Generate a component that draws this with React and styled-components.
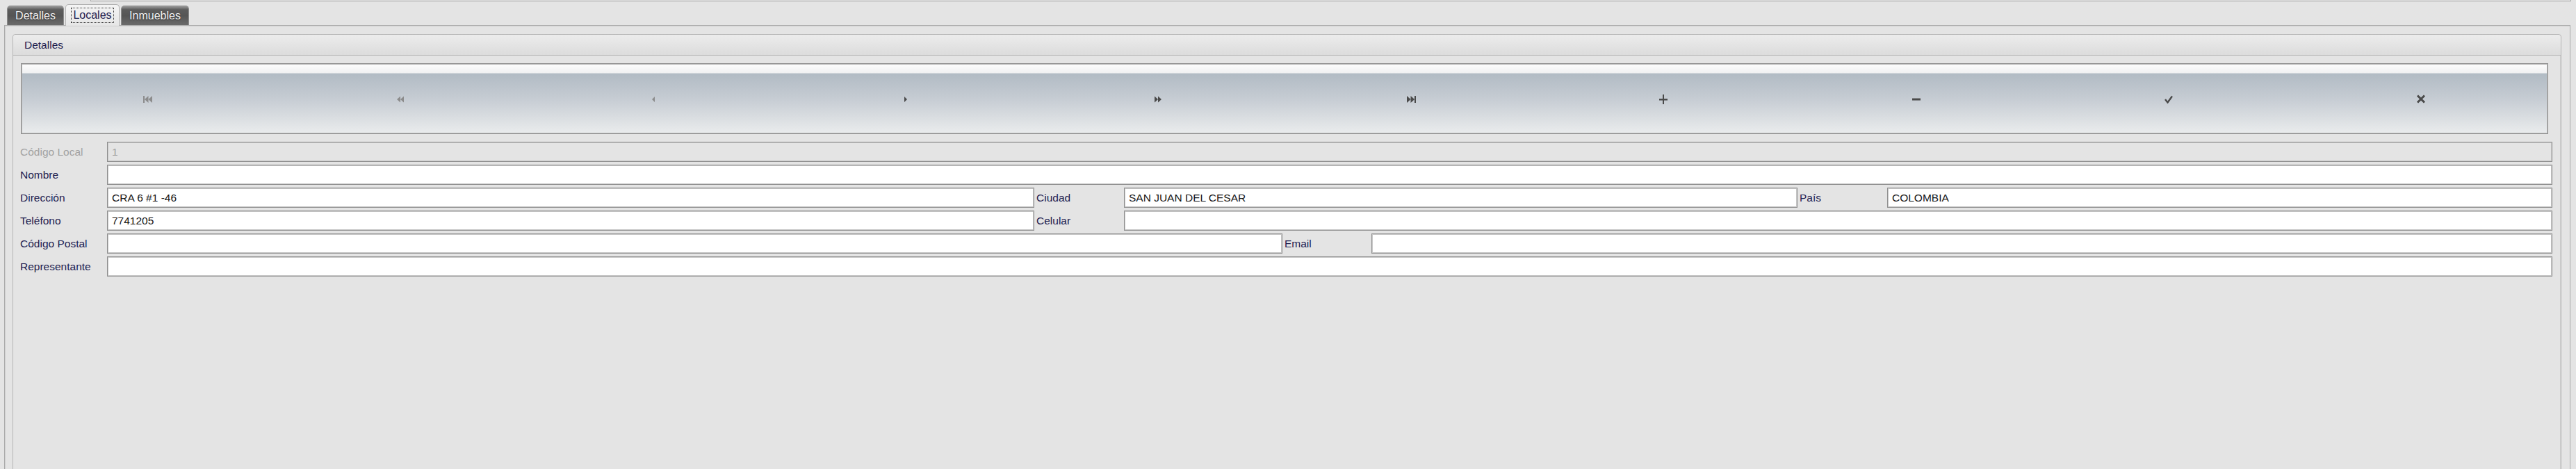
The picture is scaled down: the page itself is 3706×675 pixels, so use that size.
import React from "react";
import styled, { createGlobalStyle } from "styled-components";

const GlobalStyle = createGlobalStyle`
  html, body {
    margin: 0;
    padding: 0;
    background: #e4e4e4;
    font-family: "Liberation Sans", Arial, sans-serif;
  }
`;

const Page = styled.div`
  width: 3706px;
  height: 675px;
  overflow: hidden;
  background: #e4e4e4;
`;

const TopStrip = styled.div`
  margin-left: 130px;
  width: 3567px;
  height: 1px;
  border: 1px solid #a6a6a6;
  border-top: none;
`;

const TabBar = styled.div`
  display: flex;
  align-items: flex-end;
  gap: 2px;
  height: 34px;
  padding-left: 10px;
`;

const Tab = styled.div`
  box-sizing: border-box;
  width: ${(p) => p.$w}px;
  height: ${(p) => (p.$active ? 31 : 28)}px;
  display: flex;
  align-items: center;
  justify-content: center;
  border-radius: 5px 5px 0 0;
  font-size: 16px;
  margin-bottom: ${(p) => (p.$active ? -1 : 0)}px;
  position: relative;
  z-index: ${(p) => (p.$active ? 2 : 0)};
  ${(p) =>
    p.$active
      ? `
    background: linear-gradient(#f4f4f4, #e6e6e6);
    border: 1px solid #b2b2b2;
    border-bottom: none;
    color: #1d2050;
  `
      : `
    background: linear-gradient(#9a9a9a 0%, #5c5c5c 18%, #555 50%, #6a6a6a 100%);
    border: 1px solid #8e8e8e;
    border-bottom: none;
    color: #f4f4f4;
    text-shadow: 0 1px 1px #222;
  `}
`;

const FocusText = styled.span`
  outline: 1px dotted #333;
  outline-offset: 1px;
  padding: 0 1px;
`;

const TabPanel = styled.div`
  box-sizing: border-box;
  margin-left: 6px;
  width: 3692px;
  height: 700px;
  border: 1px solid #a9a9a9;
  box-shadow: inset 1px 1px 0 #cfcfcf;
  padding: 12px 12px 0 11px;
  position: relative;
  z-index: 1;
`;

const Section = styled.div`
  box-sizing: border-box;
  height: 700px;
  border: 1px solid #b4b4b4;
  border-radius: 4px 4px 0 0;
  box-shadow: inset -1px 0 0 #d0d0d0;
`;

const SectionHeader = styled.div`
  height: 29px;
  display: flex;
  align-items: center;
  padding-left: 16px;
  font-size: 15.5px;
  color: #1d2050;
  background: linear-gradient(#ececec, #dcdcdc);
  border-bottom: 1px solid #b6b6b6;
  border-radius: 4px 4px 0 0;
`;

const SectionBody = styled.div`
  padding: 11px 12px 0 11px;
`;

const Toolbar = styled.div`
  box-sizing: border-box;
  height: 102px;
  margin-right: 6px;
  display: flex;
  border: 1px solid #8e8e8e;
  box-shadow: inset 0 0 0 1px #b8b8b8;
  background: linear-gradient(
    #fdfdfd 0px,
    #f0f1f2 13px,
    #b1bbc4 14px,
    #c6ccd3 50px,
    #eaeced 100%
  );
`;

const ToolButton = styled.div`
  flex: 1;
  display: flex;
  align-items: center;
  justify-content: center;
  padding-top: 1px;
  color: ${(p) => (p.$dim ? "#8c8c8c" : "#4a4a4a")};
`;

const Form = styled.div`
  margin-top: 11px;
  margin-left: -1px;
  display: grid;
  grid-template-columns: 125px 1334px 129px 228px 128px 613px 129px 957px;
  grid-auto-rows: 29px;
  row-gap: 4px;
`;

const Label = styled.div`
  display: flex;
  align-items: center;
  padding-left: ${(p) => (p.$first ? 0 : 3)}px;
  font-size: 15.5px;
  color: ${(p) => (p.$disabled ? "#a2a2a2" : "#1d2050")};
  white-space: nowrap;
`;

const Field = styled.div`
  box-sizing: border-box;
  grid-column: ${(p) => p.$span};
  display: flex;
  align-items: center;
  padding-left: 6px;
  font-size: 15.5px;
  color: ${(p) => (p.$disabled ? "#a0a0a0" : "#151515")};
  background: ${(p) => (p.$disabled ? "#e4e4e4" : "#ffffff")};
  border: 1px solid #8f8f8f;
  box-shadow: inset 1px 1px 0 #c6c6c6, inset -1px -1px 0 #c6c6c6;
  white-space: nowrap;
`;

const Icon = ({ children, w = 16, h = 12 }) => (
  <svg width={w} height={h} viewBox={`0 0 ${w} ${h}`} fill="currentColor">
    {children}
  </svg>
);

const icons = [
  {
    dim: true,
    svg: (
      <Icon>
        <rect x="1" y="1" width="2" height="10" />
        <polygon points="3,6 8.5,1 8.5,11" />
        <polygon points="8.5,6 14,1 14,11" />
      </Icon>
    ),
  },
  {
    dim: true,
    svg: (
      <Icon>
        <polygon points="3,6 8,1.5 8,10.5" />
        <polygon points="8,6 13,1.5 13,10.5" />
      </Icon>
    ),
  },
  {
    dim: true,
    svg: (
      <Icon>
        <polygon points="6,6 10,2 10,10" />
      </Icon>
    ),
  },
  {
    dim: false,
    svg: (
      <Icon>
        <polygon points="6,2 10,6 6,10" />
      </Icon>
    ),
  },
  {
    dim: false,
    svg: (
      <Icon>
        <polygon points="3,1.5 8,6 3,10.5" />
        <polygon points="8,1.5 13,6 8,10.5" />
      </Icon>
    ),
  },
  {
    dim: false,
    svg: (
      <Icon>
        <polygon points="2,1 7.5,6 2,11" />
        <polygon points="7.5,1 13,6 7.5,11" />
        <rect x="13" y="1" width="2" height="10" />
      </Icon>
    ),
  },
  {
    dim: false,
    svg: (
      <Icon h={14}>
        <rect x="7" y="0" width="2" height="14" />
        <rect x="2" y="6" width="12" height="2.5" />
      </Icon>
    ),
  },
  {
    dim: false,
    svg: (
      <Icon>
        <rect x="2" y="4.5" width="12" height="3" />
      </Icon>
    ),
  },
  {
    dim: false,
    svg: (
      <Icon>
        <polyline
          points="3,6 6.5,10.5 13,1.5"
          fill="none"
          stroke="currentColor"
          strokeWidth="2.4"
        />
      </Icon>
    ),
  },
  {
    dim: false,
    svg: (
      <Icon h={13}>
        <path
          d="M3 1.5 L13 11.5 M13 1.5 L3 11.5"
          fill="none"
          stroke="currentColor"
          strokeWidth="3"
        />
      </Icon>
    ),
  },
];

export default function App() {
  return (
    <Page>
      <GlobalStyle />
      <TopStrip />
      <TabBar>
        <Tab $w={82}>Detalles</Tab>
        <Tab $w={78} $active>
          <FocusText>Locales</FocusText>
        </Tab>
        <Tab $w={98}>Inmuebles</Tab>
      </TabBar>
      <TabPanel>
        <Section>
          <SectionHeader>Detalles</SectionHeader>
          <SectionBody>
            <Toolbar>
              {icons.map((ic, i) => (
                <ToolButton key={i} $dim={ic.dim}>
                  {ic.svg}
                </ToolButton>
              ))}
            </Toolbar>
            <Form>
              <Label $first $disabled>
                Código Local
              </Label>
              <Field $span="2 / 9" $disabled>
                1
              </Field>

              <Label $first>Nombre</Label>
              <Field $span="2 / 9" />

              <Label $first>Dirección</Label>
              <Field $span="2 / 3">CRA 6 #1 -46</Field>
              <Label>Ciudad</Label>
              <Field $span="4 / 7">SAN JUAN DEL CESAR</Field>
              <Label>País</Label>
              <Field $span="8 / 9">COLOMBIA</Field>

              <Label $first>Teléfono</Label>
              <Field $span="2 / 3">7741205</Field>
              <Label>Celular</Label>
              <Field $span="4 / 9" />

              <Label $first>Código Postal</Label>
              <Field $span="2 / 5" />
              <Label>Email</Label>
              <Field $span="6 / 9" />

              <Label $first>Representante</Label>
              <Field $span="2 / 9" />
            </Form>
          </SectionBody>
        </Section>
      </TabPanel>
    </Page>
  );
}
